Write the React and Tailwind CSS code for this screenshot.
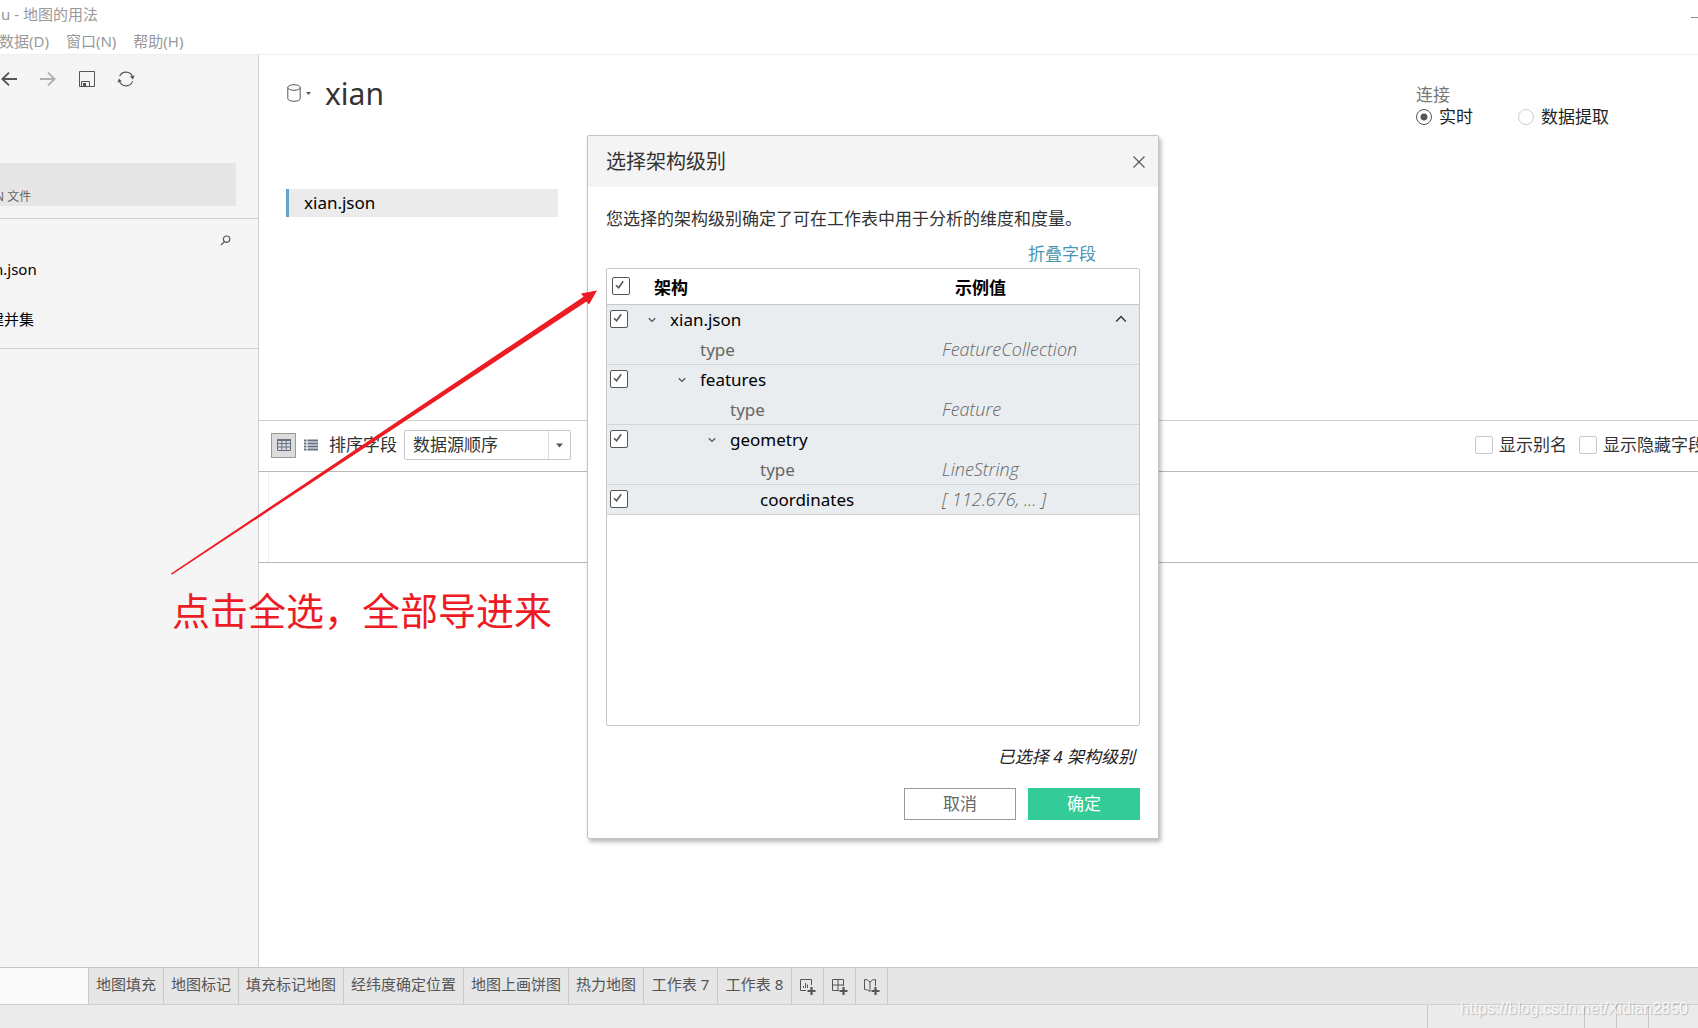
import React from "react";

const menus = ["数据(D)", "窗口(N)", "帮助(H)"];
const sheets = ["地图填充", "地图标记", "填充标记地图", "经纬度确定位置", "地图上画饼图", "热力地图", "工作表 7", "工作表 8"];

const rows = [
  { name: "xian.json", indent: "pt-[2px] pl-[42px]", level: true, open: true, collapse: true },
  { name: "type", indent: "pt-[2px] pl-[72px]", value: "FeatureCollection", last: true },
  { name: "features", indent: "pt-[2px] pl-[72px]", level: true, open: true },
  { name: "type", indent: "pt-[2px] pl-[102px]", value: "Feature", last: true },
  { name: "geometry", indent: "pt-[2px] pl-[102px]", level: true, open: true },
  { name: "type", indent: "pt-[2px] pl-[132px]", value: "LineString", last: true },
  { name: "coordinates", indent: "pt-[2px] pl-[132px]", level: true, value: "[ 112.676, ... ]", last: true },
];

function Tick({ label }) {
  return (
    <span className="grid size-[18px]">
      <input
        type="checkbox"
        defaultChecked
        aria-label={label}
        className="peer col-start-1 row-start-1 size-[18px] appearance-none rounded-[2px] border border-[#555] bg-white"
      />
      <svg viewBox="0 0 18 18" className="pointer-events-none invisible col-start-1 row-start-1 size-[18px] peer-checked:visible" fill="none" stroke="#555" strokeWidth="1.6">
        <path d="M4 8.2 L6.6 10.8 L11.2 4.2" />
      </svg>
    </span>
  );
}

function Chevron({ up }) {
  return up ? (
    <svg viewBox="0 0 12 8" className="h-[8px] w-[12px]" fill="none" stroke="#333" strokeWidth="1.4">
      <path d="M1.2 6.6 L6 1.6 L10.8 6.6" />
    </svg>
  ) : (
    <svg viewBox="0 0 8 6" className="h-[6px] w-[8px]" fill="none" stroke="#555" strokeWidth="1.3">
      <path d="M0.8 1.2 L4 4.4 L7.2 1.2" />
    </svg>
  );
}

function Plus() {
  return <path d="M12.5 9v8M8.5 13h8" stroke="#555" strokeWidth="2.2" />;
}

function Sidebar() {
  return (
    <aside className="flex w-[259px] shrink-0 flex-col overflow-hidden border-r border-[#cfcfcf] bg-[#f5f5f5]">
      <div className="flex h-[47px] items-center gap-[23px]">
        <button aria-label="后退" className="ml-px">
          <svg viewBox="0 0 16 16" className="size-4" fill="none" stroke="#555" strokeWidth="1.9">
            <path d="M16 8H1.4M8 1.6L1.4 8L8 14.4" />
          </svg>
        </button>
        <button aria-label="前进">
          <svg viewBox="0 0 16 16" className="size-4" fill="none" stroke="#b0b0b0" strokeWidth="1.9">
            <path d="M0 8H14.6M8 1.6L14.6 8L8 14.4" />
          </svg>
        </button>
        <button aria-label="保存">
          <svg viewBox="0 0 16 16" className="size-4" fill="none" stroke="#555">
            <path d="M0.5 0.5H15.5V15.5H0.5Z M2.5 15.5V10.5H10.5V15.5" />
            <path d="M4 12H7V15H4Z" fill="#555" stroke="none" />
          </svg>
        </button>
        <button aria-label="刷新" className="-ml-px">
          <svg viewBox="0 0 18 16" className="h-4 w-[18px]" fill="none" stroke="#555" strokeWidth="1.1">
            <path d="M2.6 5.2A7 7 0 0 1 15.6 5.8M15.6 10.4A7 7 0 0 1 2.4 10" />
            <path d="M13 5.6L17.6 4.4L16 8.4Z M0.4 11.4L2 7.4L4.8 10.2Z" fill="#555" stroke="none" />
          </svg>
        </button>
      </div>
      <div className="mt-[61px] mr-[22px] flex h-[43px] items-end bg-[#e6e6e6] pb-px text-[12px] leading-4 text-[#666]">
        <span className="-ml-[5px]">N 文件</span>
      </div>
      <div className="mt-[12px] flex h-[131px] flex-col border-y border-[#cfcfcf]">
        <button aria-label="搜索" className="mt-[16px] mr-[27px] self-end">
          <svg viewBox="0 0 11 11" className="size-[11px]" fill="none" stroke="#555" strokeWidth="1.2">
            <circle cx="6.6" cy="4.2" r="3.2" />
            <path d="M4.4 6.6L1 10" />
          </svg>
        </button>
        <span className="mt-[11px] -ml-[6px] text-[15px] leading-6 text-black">n.json</span>
        <span className="mt-[26px] -ml-[11px] text-[15px] leading-6 text-black">建并集</span>
      </div>
    </aside>
  );
}

function ConnectionOptions() {
  return (
    <fieldset className="mr-[89px] pt-[29px] text-[17px] leading-[22px]">
      <legend className="contents text-[#777]">连接</legend>
      <div className="flex gap-[45px] text-[#222]">
        {["实时", "数据提取"].map((label, i) => (
          <label key={label} className="flex items-center gap-[7px]">
            <input
              type="radio"
              name="connection"
              defaultChecked={i === 0}
              className="size-4 appearance-none rounded-full border border-[#ccc] checked:border-[#555] checked:bg-[radial-gradient(circle,#555_3px,transparent_4px)]"
            />
            {label}
          </label>
        ))}
      </div>
    </fieldset>
  );
}

function GridToolbar() {
  return (
    <div className="flex h-[52px] items-center border-y border-t-[#d0d0d0] border-b-[#b8b8b8] pb-[2px] text-[17px] text-[#333]">
      <button aria-label="网格视图" className="ml-[12px] grid size-[25px] place-items-center border border-[#999] bg-[#dcdcdc]">
        <svg viewBox="0 0 14 12" className="h-[12px] w-[14px]" fill="none" stroke="#667085">
          <path d="M0.5 1H13.5V11.5H0.5Z M0.5 4.5H13.5M0.5 8H13.5M4.8 1V11.5M9.2 1V11.5" />
          <path d="M0 1H14" strokeWidth="2" />
        </svg>
      </button>
      <button aria-label="列表视图" className="ml-[8px]">
        <svg viewBox="0 0 14 12" className="h-[12px] w-[14px]" stroke="#667085" strokeWidth="1.9">
          <path d="M0 1.5H2.5M0 4.5H2.5M0 7.5H2.5M0 10.5H2.5M3.5 1.5H14M3.5 4.5H14M3.5 7.5H14M3.5 10.5H14" />
        </svg>
      </button>
      <label htmlFor="sort" className="ml-[11px]">排序字段</label>
      <div className="ml-[7px] grid h-[30px] w-[167px] rounded-[2px] border border-[#c8c8c8]">
        <select id="sort" className="col-start-1 row-start-1 appearance-none bg-transparent pl-[8px] leading-6">
          <option>数据源顺序</option>
        </select>
        <span className="pointer-events-none col-start-1 row-start-1 grid w-[22px] place-items-center justify-self-end border-l border-[#ddd]">
          <svg viewBox="0 0 7 5" className="h-[5px] w-[7px]" fill="#555"><path d="M0 0.5H7L3.5 4.5Z" /></svg>
        </span>
      </div>
      <div className="-mr-[7px] ml-auto flex shrink-0 gap-[12px] whitespace-nowrap">
        {["显示别名", "显示隐藏字段"].map((label) => (
          <label key={label} className="flex items-center gap-[6px]">
            <input type="checkbox" className="size-[18px] appearance-none rounded-[2px] border border-[#c8c8c8] bg-white" />
            {label}
          </label>
        ))}
      </div>
    </div>
  );
}

function SchemaDialog() {
  return (
    <section
      role="dialog"
      aria-label="选择架构级别"
      className="absolute top-[135px] left-[587px] w-[572px] rounded-[2px] border border-[#c4c4c4] bg-white text-[17px] shadow-[2px_3px_4px_rgba(0,0,0,0.28)]"
    >
      <header className="flex h-[51px] items-center justify-between bg-[#f4f4f4] pr-[13px] pl-[18px]">
        <h2 className="text-[20px] text-[#333]">选择架构级别</h2>
        <button aria-label="关闭">
          <svg viewBox="0 0 12 12" className="size-3" fill="none" stroke="#555" strokeWidth="1.1">
            <path d="M0.5 0.5L11.5 11.5M11.5 0.5L0.5 11.5" />
          </svg>
        </button>
      </header>
      <div className="flex flex-col px-[18px] pb-[18px]">
        <p className="mt-[20px] leading-6 text-[#333]">您选择的架构级别确定了可在工作表中用于分析的维度和度量。</p>
        <a href="#" className="mt-[11px] mr-[44px] self-end leading-6 text-[#4996b2]">折叠字段</a>
        <div className="mt-[2px] h-[458px] rounded-[2px] border border-[#c8c8c8]">
          <table className="w-full table-fixed border-collapse text-left">
            <thead>
              <tr className="h-[35px] border-b border-[#c8c8c8] leading-6 text-black">
                <th className="w-[21px] pb-px pl-[5px]"><Tick label="全选" /></th>
                <th className="w-[314px] pt-[3px] pl-[26px] font-bold">架构</th>
                <th className="pt-[3px] pl-[13px] font-bold">示例值</th>
                <th className="w-[24px]" />
              </tr>
            </thead>
            <tbody>
              {rows.map((r, i) => (
                <tr key={i} className={r.last ? "h-[30px] border-b border-[#d4d4d4] bg-[#e9edf0] leading-6" : "h-[30px] bg-[#e9edf0] leading-6"}>
                  <td className="pl-[3px]">{r.level && <Tick label={r.name} />}</td>
                  <td className={r.indent}>
                    <span className="flex items-center">
                      {r.open && <button aria-label={"展开 " + r.name} className="mr-[14px] -ml-[22px]"><Chevron /></button>}
                      <span className={r.level ? "text-black" : "text-[#666]"}>{r.name}</span>
                    </span>
                  </td>
                  <td className="font-['Open_Sans','Noto_Sans_CJK_SC',sans-serif] text-[18px] font-light whitespace-nowrap text-[#666] italic">{r.value}</td>
                  <td>{r.collapse && <button aria-label="折叠" className="flex"><Chevron up /></button>}</td>
                </tr>
              ))}
            </tbody>
          </table>
        </div>
        <p className="mt-[19px] mr-[5px] text-right leading-6 text-[#222] italic">已选择 4 架构级别</p>
        <div className="mt-[19px] flex justify-end gap-3">
          <button className="h-8 w-[112px] border border-[#999] bg-white text-[#666]">取消</button>
          <button className="h-8 w-[112px] bg-[#33cc99] text-white">确定</button>
        </div>
      </div>
    </section>
  );
}

function Footer() {
  return (
    <footer className="shrink-0 border-t border-[#c8c8c8]">
      <nav className="flex h-[37px] border-b border-[#cfcfcf] bg-[#e6e6e6] text-[15px] text-[#555]">
        <div className="w-[89px] border-r border-[#c8c8c8] bg-[#fafafa]" />
        {sheets.map((s) => (
          <button key={s} className="min-w-[74px] border-r border-[#c8c8c8] px-[7px] pb-[3px] whitespace-nowrap">{s}</button>
        ))}
        <button aria-label="新建工作表" className="grid w-8 place-items-center border-r border-[#c8c8c8]">
          <svg viewBox="0 0 17 17" className="size-[17px]" fill="none" stroke="#555">
            <path d="M12.5 7V1.5H1.5V12.5H7M4.5 10V8M6.5 10V5M8.5 10V6.5" />
            <Plus />
          </svg>
        </button>
        <button aria-label="新建仪表板" className="grid w-8 place-items-center border-r border-[#c8c8c8]">
          <svg viewBox="0 0 17 17" className="size-[17px]" fill="none" stroke="#555">
            <path d="M12.5 8V1.5H1.5V12.5H8M7 1.5V12.5M1.5 7H12.5" />
            <Plus />
          </svg>
        </button>
        <button aria-label="新建故事" className="grid w-8 place-items-center border-r border-[#c8c8c8]">
          <svg viewBox="0 0 17 17" className="size-[17px]" fill="none" stroke="#555">
            <path d="M12.5 8V1.5L9.5 2L7 4L4.5 2L1.5 1.5V11.5L4.5 12L7 13.5V4" />
            <Plus />
          </svg>
        </button>
      </nav>
      <div className="flex h-[23px] justify-end bg-[#ebebeb]">
        <span className="w-[157px] border-l border-[#c8c8c8]" />
        <span className="w-8 border-l border-[#c8c8c8]" />
        <span className="w-8 border-l border-[#c8c8c8]" />
        <span className="w-[50px] border-l border-[#c8c8c8]" />
      </div>
    </footer>
  );
}

export default function App() {
  return (
    <div className="relative flex h-screen flex-col overflow-hidden bg-white font-['Noto_Sans','Noto_Sans_CJK_SC',sans-serif]">
      <header className="shrink-0 border-b border-[#eee] text-[15px] text-[#999]">
        <div className="flex h-[28px] items-center justify-between">
          <span className="ml-px">u - 地图的用法</span>
          <button aria-label="最小化" className="h-4 w-[7px] pt-[7px]"><span className="block h-px bg-[#888]" /></button>
        </div>
        <nav className="flex h-[26px] items-center gap-[17px]">
          {menus.map((m) => (
            <button key={m} className="first:-ml-px">{m}</button>
          ))}
        </nav>
      </header>

      <div className="flex min-h-0 grow">
        <Sidebar />
        <main className="flex min-w-0 grow flex-col overflow-hidden">
          <div className="flex h-[365px] justify-between">
            <div className="pl-[27px]">
              <div className="ml-px flex items-center pt-[18px]">
                <button aria-label="数据源" className="flex items-center gap-[5px] pb-[2px]">
                  <svg viewBox="0 0 14 18" className="h-[18px] w-[14px]" fill="none" stroke="#555">
                    <ellipse cx="7" cy="3.5" rx="6.2" ry="2.8" />
                    <path d="M0.8 3.5V14.5C0.8 18.2 13.2 18.2 13.2 14.5V3.5" />
                  </svg>
                  <svg viewBox="0 0 5 3" className="h-[3px] w-[5px]" fill="#555"><path d="M0 0H5L2.5 3Z" /></svg>
                </button>
                <h1 className="ml-[14px] text-[30px] leading-[42px] text-[#333]">xian</h1>
              </div>
              <button className="mt-[74px] flex h-[28px] w-[272px] items-center border-l-[3px] border-[#62a5c5] bg-[#ebebeb] pl-[15px] text-[17px] text-black">xian.json</button>
            </div>
            <ConnectionOptions />
          </div>
          <GridToolbar />
          <div className="flex h-[91px] border-b border-[#b8b8b8]">
            <div className="w-[10px] border-r border-[#eee]" />
          </div>
        </main>
      </div>

      <Footer />
      <SchemaDialog />

      <svg viewBox="0 0 430 290" className="pointer-events-none absolute top-[288px] left-[170px] h-[290px] w-[430px]" fill="#ed1c24">
        <path d="M1 285.4L413.5 8.8L411 5.6L427 2.5L419 16.5L416.5 13.6L1.8 286.8Z" />
      </svg>
      <p className="pointer-events-none absolute top-[586px] left-[172px] text-[38px] leading-[48px] text-[#ed1c24]">点击全选，全部导进来</p>
      <span className="pointer-events-none absolute right-[10px] bottom-[7px] font-['Liberation_Sans',sans-serif] text-[16px] leading-6 text-white/80 [text-shadow:1px_1px_1px_rgba(0,0,0,0.22)]">https://blog.csdn.net/Xidian2850</span>
    </div>
  );
}
